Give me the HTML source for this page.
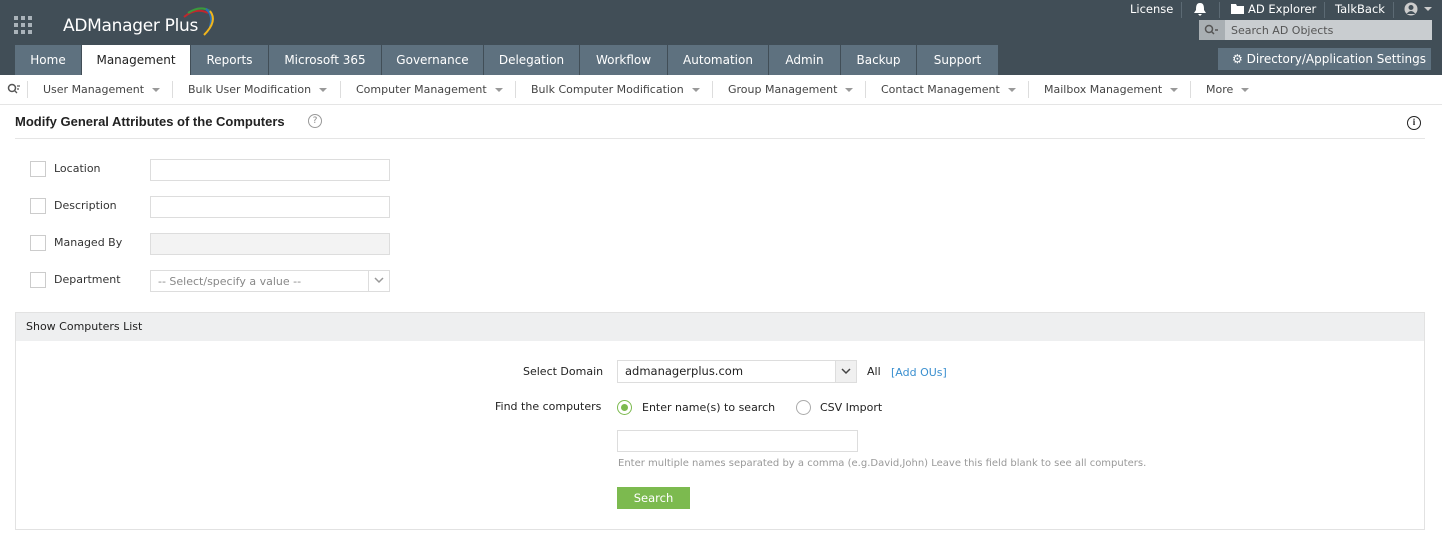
<!DOCTYPE html>
<html><head><meta charset="utf-8"><style>
*{box-sizing:border-box;margin:0;padding:0}
body{width:1442px;height:548px;overflow:hidden;background:#fff;font-family:"DejaVu Sans","Liberation Sans",sans-serif;font-size:11.5px;color:#333;position:relative}
.abs{position:absolute}
#hdr{left:0;top:0;width:1442px;height:75px;background:#414e57}
.tab{position:absolute;top:45px;height:30px;background:#5e717f;color:#fff;font-size:12px;line-height:30px;text-align:center}
.tab.act{background:#fff;color:#222}
.sub{position:absolute;top:83px;font-size:11px;color:#444}
.sep{position:absolute;top:81px;width:1px;height:17px;background:#ddd}
.caret{display:inline-block;width:0;height:0;border-left:4px solid transparent;border-right:4px solid transparent;border-top:4px solid #999;margin-left:8px;vertical-align:middle}
.cb{position:absolute;left:30px;width:16px;height:16px;border:1px solid #ccc;background:#fff}
.lbl{position:absolute;left:54px;font-size:11px;color:#333}
.inp{position:absolute;left:150px;width:240px;height:22px;border:1px solid #ddd;background:#fff}
</style></head><body>
<div id="hdr" class="abs"></div>
<svg class="abs" style="left:14px;top:16px" width="20" height="20"><g fill="#aab3ba"><rect x="0" y="0" width="4" height="4"/><rect x="7" y="0" width="4" height="4"/><rect x="14" y="0" width="4" height="4"/><rect x="0" y="7" width="4" height="4"/><rect x="7" y="7" width="4" height="4"/><rect x="14" y="7" width="4" height="4"/><rect x="0" y="14" width="4" height="4"/><rect x="7" y="14" width="4" height="4"/><rect x="14" y="14" width="4" height="4"/></g></svg>
<div class="abs" style="left:63px;top:16px;color:#fff;font-size:17px;font-family:'DejaVu Sans',sans-serif;letter-spacing:-0.3px">ADManager Plus</div>
<svg class="abs" style="left:180px;top:5px" width="40" height="32"><path d="M4 12 Q16 2 28 8" stroke="#c0272d" stroke-width="2" fill="none"/><path d="M8 8 Q20 0 30 6" stroke="#3a9a3c" stroke-width="2" fill="none"/><path d="M26 4 Q34 10 30 22" stroke="#2a6fb5" stroke-width="2.5" fill="none"/><path d="M30 6 Q38 16 24 30" stroke="#f1b51c" stroke-width="2" fill="none"/></svg>
<div class="abs" style="left:1130px;top:2px;color:#fff;font-size:11.5px">License</div>
<div class="abs" style="left:1181px;top:2px;width:1px;height:16px;background:#5c6a74"></div>
<svg class="abs" style="left:1193px;top:2px" width="14" height="14"><path d="M7 1 C3 1 3 5 3 8 L1 11 H13 L11 8 C11 5 11 1 7 1Z M5 12 H9 L7 14Z" fill="#fff"/></svg>
<div class="abs" style="left:1219px;top:2px;width:1px;height:16px;background:#5c6a74"></div>
<svg class="abs" style="left:1231px;top:4px" width="13" height="10"><path d="M0 0 H5 L6 2 H13 V10 H0Z" fill="#fff"/></svg>
<div class="abs" style="left:1248px;top:2px;color:#fff;font-size:11.5px">AD Explorer</div>
<div class="abs" style="left:1324px;top:2px;width:1px;height:16px;background:#5c6a74"></div>
<div class="abs" style="left:1335px;top:2px;color:#fff;font-size:11.5px">TalkBack</div>
<div class="abs" style="left:1393px;top:2px;width:1px;height:16px;background:#5c6a74"></div>
<svg class="abs" style="left:1404px;top:2px" width="30" height="14"><circle cx="7" cy="7" r="6.5" fill="#ccc"/><circle cx="7" cy="5.5" r="2.5" fill="#414e57"/><path d="M2.5 12 Q7 6 11.5 12" fill="#414e57"/><path d="M20 5 L28 5 L24 9Z" fill="#ccc"/></svg>
<div class="abs" style="left:1199px;top:20px;width:233px;height:20px;background:#c9cdd0"></div>
<div class="abs" style="left:1199px;top:20px;width:26px;height:20px;background:#a9afb3"></div>
<svg class="abs" style="left:1204px;top:24px" width="16" height="12"><circle cx="5" cy="5" r="3.5" stroke="#555" stroke-width="1.5" fill="none"/><path d="M7.5 7.5 L10 10 M11 6 H14" stroke="#555" stroke-width="1.5"/></svg>
<div class="abs" style="left:1231px;top:24px;color:#555;font-size:11px">Search AD Objects</div>
<div class="abs" style="left:1218px;top:48px;width:213px;height:22px;background:#5e717f;color:#fff;font-size:12px;line-height:22px;padding-left:14px">&#9881; Directory/Application Settings</div>
<div class="tab" style="left:15px;width:66px">Home</div>
<div class="tab act" style="left:82px;width:108px">Management</div>
<div class="tab" style="left:191px;width:77px">Reports</div>
<div class="tab" style="left:269px;width:112px">Microsoft 365</div>
<div class="tab" style="left:382px;width:101px">Governance</div>
<div class="tab" style="left:484px;width:95px">Delegation</div>
<div class="tab" style="left:580px;width:87px">Workflow</div>
<div class="tab" style="left:668px;width:100px">Automation</div>
<div class="tab" style="left:769px;width:71px">Admin</div>
<div class="tab" style="left:841px;width:75px">Backup</div>
<div class="tab" style="left:917px;width:81px">Support</div>
<div class="abs" style="left:0;top:104px;width:1442px;height:1px;background:#e5e5e5"></div>
<svg class="abs" style="left:7px;top:83px" width="14" height="12"><circle cx="5" cy="5" r="3.5" stroke="#555" stroke-width="1.5" fill="none"/><path d="M7.5 7.5 L10 10 M10 3 H13 M10 6 H12" stroke="#555" stroke-width="1.3"/></svg>
<div class="sep" style="left:27px"></div>
<div class="sub" style="left:43px">User Management<span class="caret"></span></div>
<div class="sep" style="left:172px"></div>
<div class="sub" style="left:188px">Bulk User Modification<span class="caret"></span></div>
<div class="sep" style="left:340px"></div>
<div class="sub" style="left:356px">Computer Management<span class="caret"></span></div>
<div class="sep" style="left:515px"></div>
<div class="sub" style="left:531px">Bulk Computer Modification<span class="caret"></span></div>
<div class="sep" style="left:712px"></div>
<div class="sub" style="left:728px">Group Management<span class="caret"></span></div>
<div class="sep" style="left:865px"></div>
<div class="sub" style="left:881px">Contact Management<span class="caret"></span></div>
<div class="sep" style="left:1028px"></div>
<div class="sub" style="left:1044px">Mailbox Management<span class="caret"></span></div>
<div class="sep" style="left:1190px"></div>
<div class="sub" style="left:1206px">More<span class="caret"></span></div>
<div class="abs" style="left:15px;top:114px;font-size:13px;color:#222;font-family:'Liberation Sans',sans-serif;font-weight:600">Modify General Attributes of the Computers</div>
<div class="abs" style="left:308px;top:114px;width:14px;height:14px;border:1px solid #999;border-radius:50%;font-size:9px;color:#888;text-align:center;line-height:12px">?</div>
<div class="abs" style="left:1407px;top:116px;width:14px;height:14px;border:1.5px solid #222;border-radius:50%;font-size:9px;color:#222;text-align:center;line-height:11px;font-weight:bold;font-family:'Liberation Serif',serif">i</div>
<div class="abs" style="left:15px;top:138px;width:1410px;height:1px;background:#e5e5e5"></div>
<div class="cb" style="top:161px"></div><div class="lbl" style="top:162px">Location</div><div class="inp" style="top:159px"></div>
<div class="cb" style="top:198px"></div><div class="lbl" style="top:199px">Description</div><div class="inp" style="top:196px"></div>
<div class="cb" style="top:235px"></div><div class="lbl" style="top:236px">Managed By</div><div class="inp" style="top:233px;background:#f3f3f3"></div>
<div class="cb" style="top:272px"></div><div class="lbl" style="top:273px">Department</div><div class="inp" style="top:270px;color:#888;padding-left:7px;line-height:21px;font-size:11px">-- Select/specify a value --</div>
<div class="abs" style="left:368px;top:271px;width:1px;height:20px;background:#ddd"></div>
<svg class="abs" style="left:374px;top:277px" width="10" height="7"><path d="M1 1 L5 5 L9 1" stroke="#999" stroke-width="1.5" fill="none"/></svg>
<div class="abs" style="left:15px;top:312px;width:1410px;height:218px;border:1px solid #e2e2e2"></div>
<div class="abs" style="left:16px;top:313px;width:1408px;height:28px;background:#eeeff0;padding-left:10px;line-height:28px;color:#222;font-size:11px">Show Computers List</div>
<div class="abs" style="left:523px;top:365px;color:#222;font-size:11px">Select Domain</div>
<div class="abs" style="left:617px;top:360px;width:240px;height:23px;border:1px solid #ddd;padding-left:7px;line-height:21px;color:#222">admanagerplus.com</div>
<div class="abs" style="left:835px;top:361px;width:21px;height:21px;background:#f0f0f0;border-left:1px solid #ddd"></div>
<svg class="abs" style="left:841px;top:368px" width="10" height="7"><path d="M1 1 L5 5 L9 1" stroke="#444" stroke-width="1.5" fill="none"/></svg>
<div class="abs" style="left:867px;top:365px;color:#222;font-size:11px">All</div>
<div class="abs" style="left:891px;top:366px;color:#3a8fcf;font-size:11px">[Add OUs]</div>
<div class="abs" style="left:495px;top:400px;color:#222;font-size:11px">Find the computers</div>
<div class="abs" style="left:617px;top:400px;width:15px;height:15px;border:1px solid #7cba4f;border-radius:50%"></div>
<div class="abs" style="left:621px;top:404px;width:7px;height:7px;background:#7cba4f;border-radius:50%"></div>
<div class="abs" style="left:642px;top:401px;color:#222;font-size:11px">Enter name(s) to search</div>
<div class="abs" style="left:796px;top:400px;width:15px;height:15px;border:1px solid #aaa;border-radius:50%"></div>
<div class="abs" style="left:820px;top:401px;color:#222;font-size:11px">CSV Import</div>
<div class="abs" style="left:617px;top:430px;width:241px;height:22px;border:1px solid #ddd"></div>
<div class="abs" style="left:618px;top:458px;color:#999;font-size:10px">Enter multiple names separated by a comma (e.g.David,John) Leave this field blank to see all computers.</div>
<div class="abs" style="left:617px;top:487px;width:73px;height:22px;background:#7cba4f;color:#fff;text-align:center;line-height:22px">Search</div>
</body></html>
